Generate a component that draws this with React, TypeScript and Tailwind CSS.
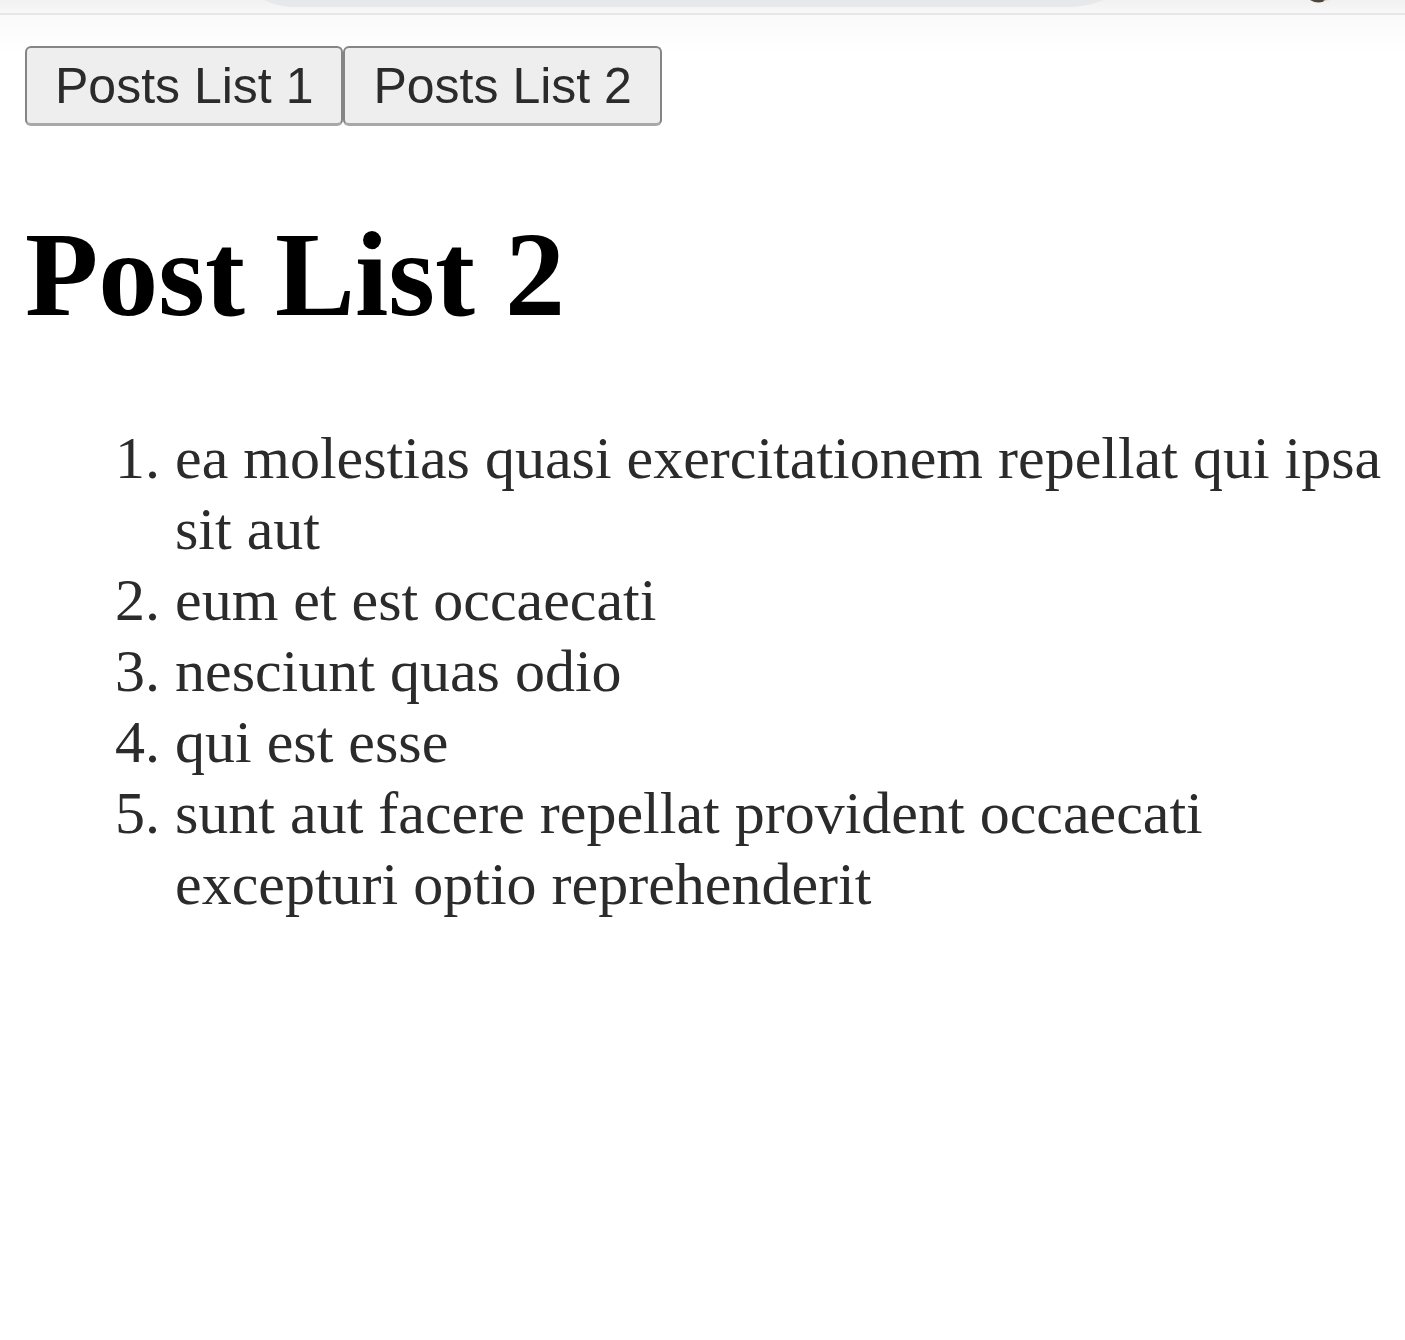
const posts = [
  'ea molestias quasi exercitationem repellat qui ipsa sit aut',
  'eum et est occaecati',
  'nesciunt quas odio',
  'qui est esse',
  'sunt aut facere repellat provident occaecati excepturi optio reprehenderit',
];

const tabs = ['Posts List 1', 'Posts List 2'];

export default function App() {
  return (
    <div className="min-h-screen bg-white">
      <header className="flex h-[15px] items-start justify-between overflow-hidden border-b-2 border-[#e6e6e6] bg-linear-to-b from-[#f1f1f1] to-[#f8f8f8] pr-[70px] pl-[264px]">
        <svg className="h-[7px] flex-1" viewBox="0 0 840 7" preserveAspectRatio="none" aria-hidden="true">
          <path d="M0 0H840Q824 7 804 7H28Q12 6 0 0Z" fill="#e6e8ea" />
        </svg>
        <svg className="ml-[204px] h-1 w-7" viewBox="0 0 28 4" aria-hidden="true">
          <path d="M3 0Q12 5 19 0Z" fill="#4b473d" />
          <path d="M16 1Q20 1 23 0H18Z" fill="#e5d6cc" />
        </svg>
      </header>
      <main className="bg-linear-to-b from-[#fafafa] to-white to-[40px] pt-[31px] pr-5 pl-[25px] font-['Liberation_Serif',serif]">
        <div className="flex">
          {tabs.map((tab) => (
            <button
              key={tab}
              type="button"
              className="h-20 rounded-md border-2 border-b-3 border-[#858585] border-b-[#a8a8a8] bg-[#eeeeee] px-7 font-['Liberation_Sans',sans-serif] text-[50px] leading-none text-[#2b2b2b]"
            >
              {tab}
            </button>
          ))}
        </div>
        <h1 className="mt-[81px] text-[120px] leading-[136px] font-bold text-black">Post List 2</h1>
        <ol className="mt-20 list-decimal pl-[150px] text-[60px] leading-[71px] text-[#2b2b2b]">
          {posts.map((post) => (
            <li key={post}>{post}</li>
          ))}
        </ol>
      </main>
    </div>
  );
}
